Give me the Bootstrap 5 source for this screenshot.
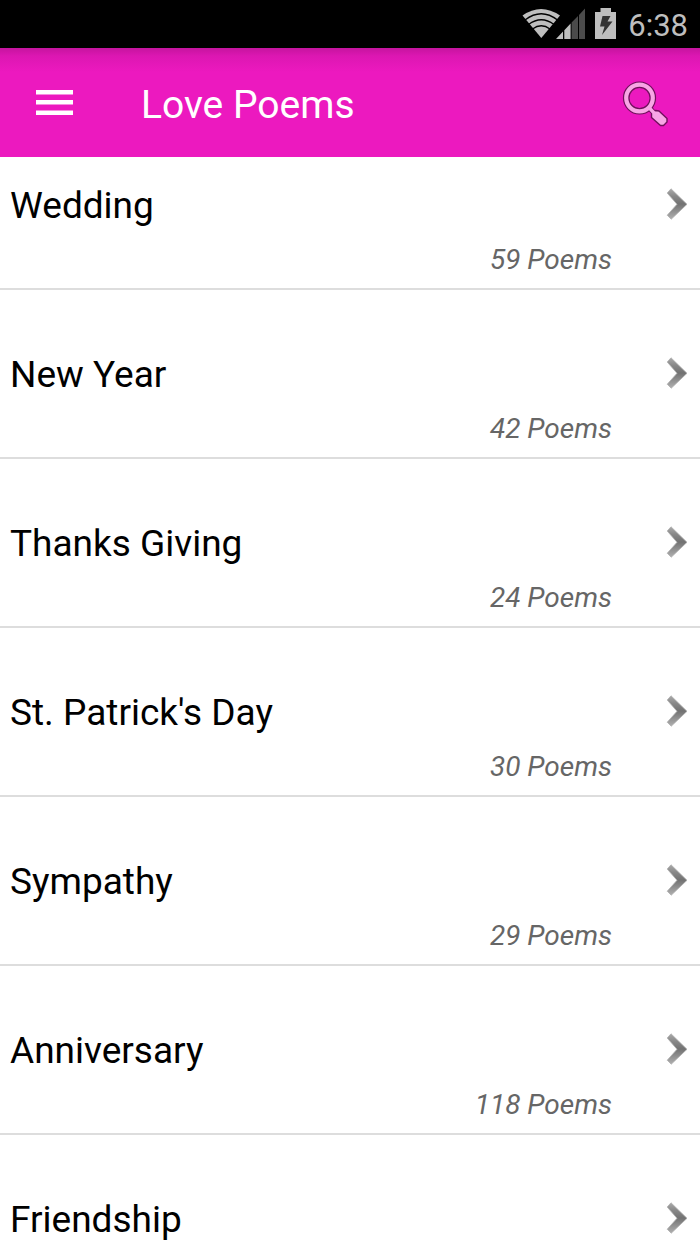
<!DOCTYPE html>
<html lang="en">
<head>
<meta charset="utf-8">
<meta name="viewport" content="width=device-width, initial-scale=1">
<title>Love Poems</title>
<link href="https://cdn.jsdelivr.net/npm/bootstrap@5.3.0/dist/css/bootstrap.min.css" rel="stylesheet">
<style>
  body { font-family: Roboto, "Noto Sans", sans-serif; color: #000; background: #fff; }
  .status-bar { height: 48px; padding-right: 12px; background: #000; color: #bebebe; }
  .status-battery { margin: 0 11px 0 9px; }
  .status-clock { font-size: 31px; line-height: 48px; padding-top: 4px; }
  .app-bar { height: 109px; padding: 0 28px 0 32px; background: linear-gradient(#c6149f, #dc17b2 8px, #ec19bf 24px); }
  .app-title { font-size: 39px; line-height: 48px; padding-top: 4px; margin-left: 64px; }
  .poem-row { padding: 61px 12px 10px 10px; border-bottom: 2px solid #ddd; }
  .poem-row:first-child { padding-top: 25px; }
  .poem-name { font-size: 37px; line-height: 48px; }
  .poem-chevron { margin-bottom: 4px; }
  .poem-count { font-size: 28px; line-height: 36px; margin: 12px 76px 0 0; color: #666; }
</style>
</head>
<body class="vh-100 overflow-hidden d-flex flex-column">
<svg class="position-absolute" width="0" height="0" aria-hidden="true">
  <linearGradient id="chevronFill" x1="0" y1="0" x2="0" y2="1">
    <stop offset="0" stop-color="#aaa"/><stop offset=".25" stop-color="#888"/><stop offset=".5" stop-color="#727272"/><stop offset="1" stop-color="#b0b0b0"/>
  </linearGradient>
  <symbol id="chevron" viewBox="0 0 22 32">
    <path d="M5 .8 21 16.3 5.200 31.200 1.200 27.200 11 16.300 1.200 5Z" fill="url(#chevronFill)" stroke="#b0b0b0" stroke-width=".8" stroke-linejoin="round"/>
  </symbol>
</svg>

<div class="status-bar d-flex align-items-center justify-content-end flex-shrink-0">
  <svg width="63" height="32" viewBox="0 0 63 32" role="img" aria-label="Wi-Fi and mobile signal">
    <path d="M.5 7.500Q19-5.500 38 7.500L19.300 30Z" fill="#bebebe"/>
    <g fill="none" stroke="#000" stroke-width="1.300">
      <path d="M3 12Q19.300-.5 35.500 12"/><path d="M6.500 16.500Q19.300 7 32 16.500"/><path d="M10.500 21Q19.300 14.500 28 21"/>
    </g>
    <path d="M34 31 41 23.500V31ZM42.300 22.200 48.600 15.600V31H42.300Z" fill="#bebebe"/>
    <path d="M49.600 14.500 56 8V31H49.600ZM57 7 63 .5V31H57Z" fill="#4b4b4b"/>
  </svg>
  <svg class="status-battery" width="23" height="32" viewBox="0 0 23 32" role="img" aria-label="Battery charging">
    <path d="M6.500 0H17V4H22V31H1V4H6.500Z" fill="#bebebe"/>
    <path d="M8.500 8H16.500L13.500 13.500H18.500L8 27 10.500 18.500H6Z" fill="#333"/>
  </svg>
  <span class="status-clock">6:38</span>
</div>

<header class="app-bar d-flex align-items-center flex-shrink-0">
  <button type="button" class="btn p-0 border-0 d-flex" aria-label="Open menu">
    <svg width="45" height="28" viewBox="0 0 45 28"><path d="M4 1h37v4.500H4zM4 11h37v4.500H4zM4 21.500h37v4.500H4z" fill="#fff"/></svg>
  </button>
  <h1 class="app-title text-white fw-normal mb-0">Love Poems</h1>
  <button type="button" class="btn p-0 border-0 d-flex ms-auto" aria-label="Search">
    <svg width="52" height="52" viewBox="0 0 52 52">
      <g fill="none" stroke-linejoin="round">
        <circle cx="19.500" cy="21" r="13.300" stroke="#70105c" stroke-width="6.600"/>
        <path d="M29 30.500 34 36" stroke="#70105c" stroke-width="5.500"/>
        <path d="M32.500 35.500 35.500 33.500 39 34 47 41.500V45L43.500 48.500H40.500L31.500 40.500V37Z" fill="#f8a5e5" stroke="#70105c" stroke-width="1.400"/>
        <circle cx="19.500" cy="21" r="13.300" stroke="#f8a5e5" stroke-width="4.200"/>
        <path d="M28.500 30 35 37" stroke="#f8a5e5" stroke-width="3.400"/>
      </g>
    </svg>
  </button>
</header>

<main class="flex-grow-1 overflow-hidden">
  <nav aria-label="Poem categories">
    <a href="#wedding" class="poem-row d-block text-reset text-decoration-none"><div class="d-flex align-items-center justify-content-between"><span class="poem-name">Wedding</span><svg class="poem-chevron" width="22" height="32"><use href="#chevron"/></svg></div><div class="poem-count fst-italic text-end">59 Poems</div></a>
    <a href="#new-year" class="poem-row d-block text-reset text-decoration-none"><div class="d-flex align-items-center justify-content-between"><span class="poem-name">New Year</span><svg class="poem-chevron" width="22" height="32"><use href="#chevron"/></svg></div><div class="poem-count fst-italic text-end">42 Poems</div></a>
    <a href="#thanks-giving" class="poem-row d-block text-reset text-decoration-none"><div class="d-flex align-items-center justify-content-between"><span class="poem-name">Thanks Giving</span><svg class="poem-chevron" width="22" height="32"><use href="#chevron"/></svg></div><div class="poem-count fst-italic text-end">24 Poems</div></a>
    <a href="#st-patricks-day" class="poem-row d-block text-reset text-decoration-none"><div class="d-flex align-items-center justify-content-between"><span class="poem-name">St. Patrick's Day</span><svg class="poem-chevron" width="22" height="32"><use href="#chevron"/></svg></div><div class="poem-count fst-italic text-end">30 Poems</div></a>
    <a href="#sympathy" class="poem-row d-block text-reset text-decoration-none"><div class="d-flex align-items-center justify-content-between"><span class="poem-name">Sympathy</span><svg class="poem-chevron" width="22" height="32"><use href="#chevron"/></svg></div><div class="poem-count fst-italic text-end">29 Poems</div></a>
    <a href="#anniversary" class="poem-row d-block text-reset text-decoration-none"><div class="d-flex align-items-center justify-content-between"><span class="poem-name">Anniversary</span><svg class="poem-chevron" width="22" height="32"><use href="#chevron"/></svg></div><div class="poem-count fst-italic text-end">118 Poems</div></a>
    <a href="#friendship" class="poem-row d-block text-reset text-decoration-none"><div class="d-flex align-items-center justify-content-between"><span class="poem-name">Friendship</span><svg class="poem-chevron" width="22" height="32"><use href="#chevron"/></svg></div></a>
  </nav>
</main>
<script src="https://cdn.jsdelivr.net/npm/bootstrap@5.3.0/dist/js/bootstrap.bundle.min.js"></script>
</body>
</html>
